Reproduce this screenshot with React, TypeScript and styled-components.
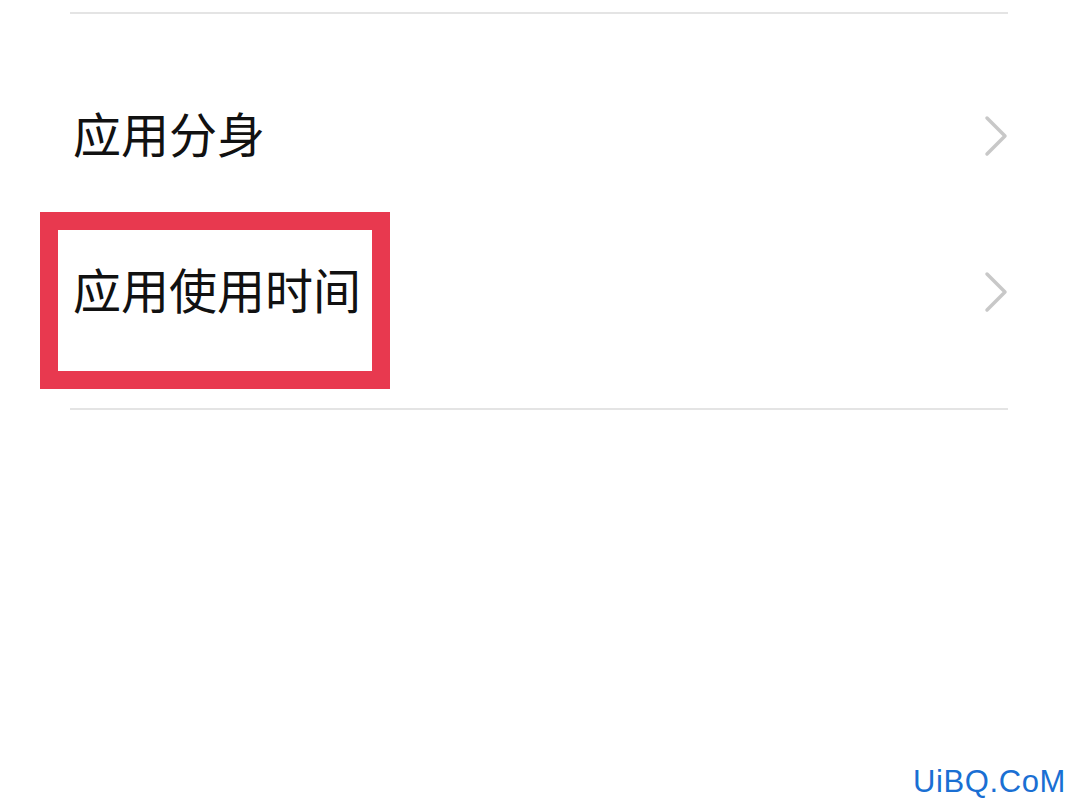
import React from 'react';
import styled, { createGlobalStyle } from 'styled-components';

const GlobalStyle = createGlobalStyle`
  html, body {
    margin: 0;
    padding: 0;
    background: #ffffff;
  }
  body {
    font-family: "Noto Sans CJK SC", "Noto Sans", sans-serif;
  }
`;

const Page = styled.div`
  position: relative;
  width: 1080px;
  height: 810px;
  overflow: hidden;
  background: #ffffff;
`;

const Section = styled.div`
  display: flex;
  flex-direction: column;
  margin: 0 72px 0 70px;
  padding-top: 12px;
`;

const Divider = styled.div`
  height: 2px;
  background: #e4e4e4;
`;

const List = styled.div`
  display: flex;
  flex-direction: column;
  padding: 44px 0 38px;
`;

const Row = styled.div`
  position: relative;
  display: flex;
  align-items: center;
  justify-content: space-between;
  height: 156px;
`;

const Label = styled.span`
  position: relative;
  z-index: 1;
  margin-top: -8px;
  padding-left: 3px;
  font-family: "Noto Sans CJK SC", "Noto Sans", sans-serif;
  font-size: 48px;
  line-height: 1;
  color: #111111;
`;

const Chevron = styled.svg`
  width: 24px;
  height: 42px;
  flex-shrink: 0;
`;

// красная рамка-выделение поверх пункта
const Highlight = styled.div`
  position: absolute;
  left: -30px;
  top: -2px;
  width: 350px;
  height: 177px;
  box-sizing: border-box;
  border: 18px solid #e8394f;
`;

const Watermark = styled.div`
  position: absolute;
  right: 14px;
  bottom: 10px;
  font-family: "Liberation Sans", Arial, sans-serif;
  font-size: 31px;
  letter-spacing: 0.6px;
  color: #1a6fd3;
`;

type ItemProps = {
  title: string;
  highlighted?: boolean;
};

const ArrowRight = () => (
  <Chevron viewBox="0 0 24 42">
    <polyline points="3,3 21,21 3,39" fill="none" stroke="#c8c8c8" strokeWidth="3.5" strokeLinecap="round" strokeLinejoin="round" />
  </Chevron>
);

const Item = ({ title, highlighted }: ItemProps) => (
  <Row>
    {highlighted && <Highlight />}
    <Label>{title}</Label>
    <ArrowRight />
  </Row>
);

const App = () => {
  return (
    <Page>
      <GlobalStyle />
      <Section>
        <Divider />
        <List>
          <Item title="应用分身" />
          <Item title="应用使用时间" highlighted />
        </List>
        <Divider />
      </Section>
      <Watermark>UiBQ.CoM</Watermark>
    </Page>
  );
};

export default App;
